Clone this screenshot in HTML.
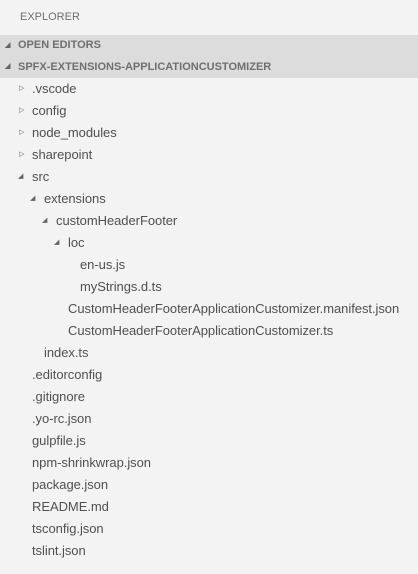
<!DOCTYPE html>
<html><head><style>
body{margin:0;width:418px;height:574px;background:#f3f3f3;font-family:"Liberation Sans",sans-serif;overflow:hidden}
.title{height:35px;line-height:35px;padding-left:20px;font-size:11px;color:#6f6f6f}
.h{height:22px;line-height:22px;background:#dcdcdc;font-size:11px;font-weight:bold;color:#6f6f6f;position:relative;padding-left:18px}
.r{height:22px;line-height:22px;font-size:13px;color:#505050;position:relative;white-space:nowrap;letter-spacing:-0.05px}
.a{position:absolute;top:0;font-size:7px;color:#646464}
</style></head><body>
<div class="title">EXPLORER</div>
<div class="h" style="height:21px;line-height:21px"><span class="a" style="left:5px;font-size:7px">◢</span>OPEN EDITORS</div>
<div class="h"><span class="a" style="left:5px;font-size:7px">◢</span>SPFX-EXTENSIONS-APPLICATIONCUSTOMIZER</div>
<div class="r" style="padding-left:32px"><span class="a" style="left:19px">▷</span>.vscode</div>
<div class="r" style="padding-left:32px"><span class="a" style="left:19px">▷</span>config</div>
<div class="r" style="padding-left:32px"><span class="a" style="left:19px">▷</span>node_modules</div>
<div class="r" style="padding-left:32px"><span class="a" style="left:19px">▷</span>sharepoint</div>
<div class="r" style="padding-left:32px"><span class="a" style="left:18px">◢</span>src</div>
<div class="r" style="padding-left:44px"><span class="a" style="left:30px">◢</span>extensions</div>
<div class="r" style="padding-left:56px"><span class="a" style="left:42px">◢</span>customHeaderFooter</div>
<div class="r" style="padding-left:68px"><span class="a" style="left:54px">◢</span>loc</div>
<div class="r" style="padding-left:80px">en-us.js</div>
<div class="r" style="padding-left:80px">myStrings.d.ts</div>
<div class="r" style="padding-left:68px">CustomHeaderFooterApplicationCustomizer.manifest.json</div>
<div class="r" style="padding-left:68px">CustomHeaderFooterApplicationCustomizer.ts</div>
<div class="r" style="padding-left:44px">index.ts</div>
<div class="r" style="padding-left:32px">.editorconfig</div>
<div class="r" style="padding-left:32px">.gitignore</div>
<div class="r" style="padding-left:32px">.yo-rc.json</div>
<div class="r" style="padding-left:32px">gulpfile.js</div>
<div class="r" style="padding-left:32px">npm-shrinkwrap.json</div>
<div class="r" style="padding-left:32px">package.json</div>
<div class="r" style="padding-left:32px">README.md</div>
<div class="r" style="padding-left:32px">tsconfig.json</div>
<div class="r" style="padding-left:32px">tslint.json</div>
</body></html>
